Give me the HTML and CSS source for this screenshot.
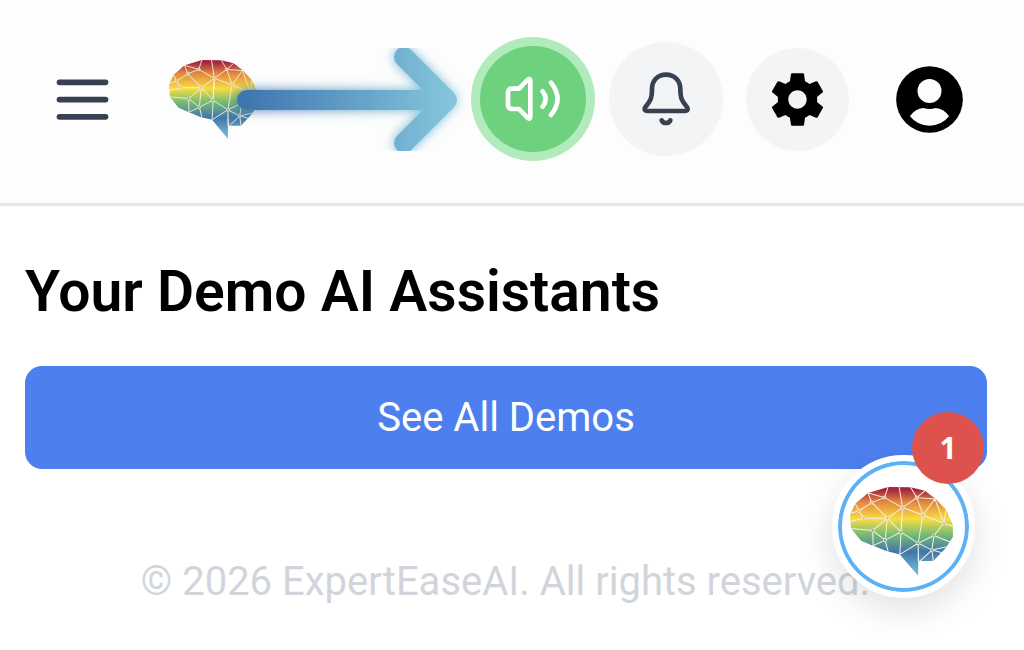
FILE: index.html
```html
<!DOCTYPE html>
<html lang="en">
<head>
    <meta charset="UTF-8">
    <meta name="viewport" content="width=device-width, initial-scale=1.0">
    <title>ExpertEaseAI</title>
    <link rel="stylesheet" href="styles.css">
</head>
<body>
<!-- Shared brain logo -->
<svg class="defs" width="0" height="0" aria-hidden="true">
    <defs>
        <linearGradient id="brain-fill" gradientUnits="userSpaceOnUse" x1="0" y1="262" x2="0" y2="530">
            <stop offset="0.03" stop-color="#a3243f"/>
            <stop offset="0.17" stop-color="#e28840"/>
            <stop offset="0.36" stop-color="#f8dc42"/>
            <stop offset="0.53" stop-color="#78bd72"/>
            <stop offset="0.73" stop-color="#3f76ad"/>
            <stop offset="1" stop-color="#82c5dd"/>
        </linearGradient>
        <symbol id="brain" viewBox="91 262 308 268" preserveAspectRatio="none">
            <path fill="url(#brain-fill)" d="M205 262 272 263 315 273 345 296 378 330 398 374 399 412 378 445 340 485H298L295 440V530L240 465 200 455 160 439 124 424 94 387 91 345 107 312 145 280Z"/>
            <path fill="none" stroke="#f6f1e4" stroke-width="3" d="M145 280 156 309 194 294ZM205 262 194 294 248 324 238 262M156 309 117 334 107 312M156 309 203 356 248 324 291 294 272 263M117 334 91 342M117 334 132 356 92 366M132 356H203L159 393 94 387M291 294 315 273M291 294 345 298 309 347ZM248 324 309 347 372 371 345 298M378 330 372 371 398 380M372 371 342 408 295 431 309 347M342 408 336 452 295 431V485M342 408 396 430M248 324 243 398 203 356 196 422 159 393 160 439 196 422 243 398 295 431 240 465ZM196 422 205 456M336 452 300 485M336 452 340 485M336 452 366 460M336 452 380 442"/>
            <g fill="#d9b98a" stroke="#f6f1e4" stroke-width="2">
                <circle cx="156" cy="309" r="5"/><circle cx="194" cy="294" r="5"/>
                <circle cx="117" cy="334" r="5"/><circle cx="132" cy="356" r="5"/>
                <circle cx="203" cy="356" r="5"/><circle cx="248" cy="324" r="5"/>
                <circle cx="291" cy="294" r="5"/><circle cx="309" cy="347" r="5"/>
                <circle cx="372" cy="371" r="5"/>
            </g>
            <g fill="#79ae92" stroke="#f6f1e4" stroke-width="2">
                <circle cx="342" cy="408" r="5"/><circle cx="295" cy="431" r="5"/>
                <circle cx="336" cy="452" r="5"/><circle cx="243" cy="398" r="5"/>
                <circle cx="159" cy="393" r="5"/><circle cx="196" cy="422" r="5"/>
            </g>
        </symbol>
    </defs>
</svg>

<header class="header">
    <button class="menu-btn" type="button" aria-label="Open menu">
        <svg viewBox="0 0 24 24"><path d="M4 6h16M4 12h16M4 18h16"/></svg>
    </button>

    <a class="logo" href="#" aria-label="ExpertEaseAI home">
        <svg class="logo-brain"><use href="#brain"/></svg>
        <svg class="logo-arrow" viewBox="0 0 260 103">
            <defs>
                <linearGradient id="arrow-fill" gradientUnits="userSpaceOnUse" x1="27" y1="0" x2="227" y2="0">
                    <stop offset="0" stop-color="#4076b0"/>
                    <stop offset="1" stop-color="#83c4dc"/>
                </linearGradient>
                <filter id="glow" filterUnits="userSpaceOnUse" x="0" y="-20" width="260" height="143">
                    <feGaussianBlur stdDeviation="6"/>
                </filter>
            </defs>
            <g fill="none" stroke="url(#arrow-fill)" stroke-width="20" stroke-linecap="round" stroke-linejoin="round">
                <path filter="url(#glow)" d="M27 52H227M184 9 227 52 184 95"/>
                <path d="M27 52H227M184 9 227 52 184 95"/>
            </g>
        </svg>
    </a>

    <div class="actions">
        <button class="icon-btn sound-btn" type="button" aria-label="Sound">
            <svg viewBox="132 119 180 180">
                <path d="M180 178H158a11 11 0 0 0-11 11V228a11 11 0 0 0 11 11H180L205 265Q214 272 214 261V156Q214 145 205 152ZM251 186Q269 209 251 232M276 160Q315 209 276 257"/>
            </svg>
        </button>
        <button class="icon-btn bell-btn" type="button" aria-label="Notifications">
            <svg viewBox="527 119 180 180">
                <path d="M617 136C592 136 575 154 575 178 575 211 568 217 555 233 550 240 553 245 560 245H675C682 245 685 240 680 233 667 217 660 211 660 178 660 154 642 136 617 136ZM604 273Q608 281 617 281T630 273"/>
            </svg>
        </button>
        <button class="icon-btn settings-btn" type="button" aria-label="Settings">
            <svg viewBox="0 0 24 24">
                <path d="M19.43 12.98c.04-.32.07-.64.07-.98s-.03-.66-.07-.98l2.11-1.65c.19-.15.24-.42.12-.64l-2-3.46c-.12-.22-.39-.3-.61-.22l-2.49 1c-.52-.4-1.08-.73-1.69-.98l-.38-2.65C14.46 2.18 14.25 2 14 2h-4c-.25 0-.46.18-.49.42l-.38 2.65c-.61.25-1.17.59-1.69.98l-2.49-1c-.23-.09-.49 0-.61.22l-2 3.46c-.13.22-.07.49.12.64l2.11 1.65c-.04.32-.07.65-.07.98s.03.66.07.98l-2.11 1.65c-.19.15-.24.42-.12.64l2 3.46c.12.22.39.3.61.22l2.49-1c.52.4 1.08.73 1.69.98l.38 2.65c.03.24.24.42.49.42h4c.25 0 .46-.18.49-.42l.38-2.65c.61-.25 1.17-.59 1.69-.98l2.49 1c.23.09.49 0 .61-.22l2-3.46c.12-.22.07-.49-.12-.64l-2.11-1.65zM12 15.5c-1.93 0-3.5-1.57-3.5-3.5s1.57-3.5 3.5-3.5 3.5 1.57 3.5 3.5-1.57 3.5-3.5 3.5z"/>
            </svg>
        </button>
        <button class="icon-btn account-btn" type="button" aria-label="Account">
            <svg viewBox="498 108 201 201">
                <circle cx="598.5" cy="208.5" r="100"/>
                <circle cx="598.5" cy="183" r="36" fill="#fdfdfd"/>
                <path fill="#fdfdfd" d="M540 259Q556 235 580 234 599 240 617 234 641 235 657 259 635 287 598 287 562 287 540 259Z"/>
            </svg>
        </button>
    </div>
</header>

<main class="main">
    <h1>Your Demo AI Assistants</h1>
    <button class="demo-btn" type="button">See All Demos</button>
</main>

<footer class="footer">© 2026 ExpertEaseAI. All rights reserved.</footer>

<button class="chat-btn" type="button" aria-label="Open chat, 1 new message">
    <svg class="chat-brain"><use href="#brain"/></svg>
    <span class="badge">1</span>
</button>
</body>
</html>
```

FILE: styles.css
```css
* {
    margin: 0;
    padding: 0;
    box-sizing: border-box;
}

body {
    min-height: 100vh;
    background-color: #fff;
    color: #000;
    font-family: Roboto, 'Liberation Sans', sans-serif;
}

button {
    border: none;
    background: none;
    font-family: inherit;
    cursor: pointer;
}

svg {
    display: block;
}

.defs {
    position: absolute;
}

/* Header */
.header {
    display: flex;
    align-items: center;
    padding: 42px 38px 47px 48px;
    background-color: #fdfdfd;
    border-bottom: 3px solid #e5e5ea;
}

.menu-btn svg {
    width: 69px;
    height: 69px;
    fill: none;
    stroke: #374151;
    stroke-width: 2;
    stroke-linecap: round;
}

.logo {
    position: relative;
    margin-left: 52px;
}

.logo-brain {
    width: 89px;
    height: 79px;
}

/* the arrow lies over the logo and points at the sound button */
.logo-arrow {
    position: absolute;
    top: -12px;
    left: 51px;
    width: 260px;
    height: 103px;
    overflow: hidden;
    pointer-events: none;
}

.actions {
    display: flex;
    align-items: center;
    gap: 23px;
    margin-left: auto;
}

.icon-btn {
    display: flex;
    align-items: center;
    justify-content: center;
    border-radius: 50%;
}

.icon-btn svg {
    width: 60px;
    height: 60px;
}

.sound-btn {
    width: 106px;
    height: 106px;
    background-color: #6dd17d;
    box-shadow: 0 0 0 9px #b1ebbc;
}

.sound-btn path,
.bell-btn path {
    fill: none;
    stroke: #fff;
    stroke-width: 14;
    stroke-linecap: round;
    stroke-linejoin: round;
}

.bell-btn {
    width: 114px;
    height: 114px;
    background-color: #f3f4f6;
}

.bell-btn path {
    stroke: #374151;
}

.settings-btn {
    width: 103px;
    height: 103px;
    background-color: #f3f4f6;
}

.settings-btn svg {
    width: 63px;
    height: 63px;
}

.account-btn {
    width: 114px;
    height: 114px;
}

.account-btn svg {
    width: 67px;
    height: 67px;
}

/* Content */
.main {
    padding: 51px 37px 0 25px;
}

h1 {
    margin-bottom: 40px;
    font-size: 57px;
    font-weight: 600;
    line-height: 69px;
}

.demo-btn {
    width: 100%;
    height: 103px;
    border-radius: 17px;
    background-color: #4d80ee;
    color: #fff;
    font-size: 40px;
}

.footer {
    padding: 89px 13px 16px 0;
    color: #d1d5db;
    font-size: 40px;
    line-height: 48px;
    text-align: center;
}

/* Floating chat */
.chat-btn {
    position: fixed;
    right: 49px;
    bottom: 52px;
    display: flex;
    align-items: center;
    justify-content: center;
    width: 143px;
    height: 143px;
    border: 6px solid #fff;
    border-radius: 50%;
    background-color: #fff;
    box-shadow: inset 0 0 0 4px #5eb1f7, 0 12px 36px rgba(0, 0, 0, 0.12);
}

.chat-brain {
    width: 103px;
    height: 89px;
    margin: 10px 4px 0 0;
}

.badge {
    position: absolute;
    top: -49px;
    right: -15px;
    width: 72px;
    height: 72px;
    border-radius: 50%;
    background-color: #dd524c;
    color: #fff;
    font-family: 'Open Sans', sans-serif;
    font-size: 30px;
    font-weight: 700;
    line-height: 72px;
    text-align: center;
}
```
